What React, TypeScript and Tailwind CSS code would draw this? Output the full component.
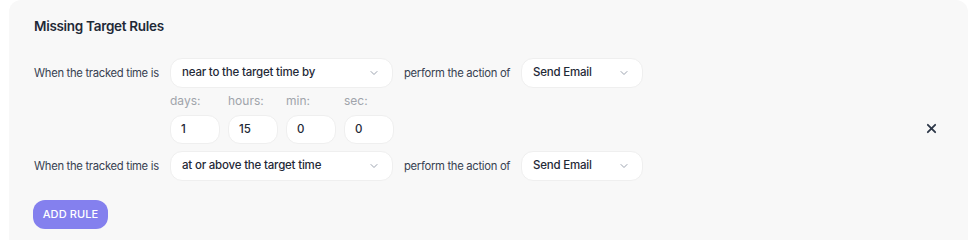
import React from "react";

const Chevron = () => (
  <svg width="12" height="12" viewBox="0 0 24 24" fill="none" stroke="#9ca3af" strokeWidth="2" strokeLinecap="round" strokeLinejoin="round">
    <path d="M6 9l6 6 6-6" />
  </svg>
);

const Select = ({ text, w }: { text: string; w: string }) => (
  <div className={`${w} h-[30px] bg-white border border-[#efefef] rounded-[12px] flex items-center justify-between pl-[11px] pr-[12px]`}>
    <span className="text-[11.5px] tracking-[-0.2px] font-medium text-[#1f2937] whitespace-nowrap">{text}</span>
    <Chevron />
  </div>
);

const TimeField = ({ label, value }: { label: string; value: string }) => (
  <div className="flex flex-col w-[50px]">
    <span className="text-[12px] text-[#a0a4ab] h-[20px] leading-[20px]">{label}</span>
    <div className="mt-[4px] h-[29px] bg-white border border-[#efefef] rounded-[12px] flex items-center pl-[10px] text-[11.5px] font-medium text-[#1f2937]">
      {value}
    </div>
  </div>
);

const Label = ({ text, w, ml }: { text: string; w: string; ml?: string }) => (
  <span className={`${w} ${ml ?? ""} text-[11.25px] tracking-[-0.3px] text-[#374151] whitespace-nowrap shrink-0`}>{text}</span>
);

export default function App() {
  return (
    <div className="w-[974px] h-[240px] bg-white overflow-hidden" style={{ fontFamily: "Inter, 'Noto Sans', sans-serif" }}>
      <div className="ml-[9px] w-[959px] h-[250px] bg-[#f8f8f8] rounded-[12px] pl-[25px] pr-[29px] pt-[15px]">
        <h2 className="text-[13.5px] tracking-[-0.3px] font-semibold text-[#1f2937] leading-[22px]">Missing Target Rules</h2>
        <div className="mt-[21px] relative">
          <div className="flex items-center">
            <Label text="When the tracked time is" w="w-[136px]" />
            <Select text="near to the target time by" w="w-[223px]" />
            <Label text="perform the action of" w="w-[117px]" ml="ml-[11px]" />
            <Select text="Send Email" w="w-[122px]" />
          </div>
          <div className="ml-[136px] mt-[3px] flex gap-[8px]">
            <TimeField label="days:" value="1" />
            <TimeField label="hours:" value="15" />
            <TimeField label="min:" value="0" />
            <TimeField label="sec:" value="0" />
          </div>
          <button className="absolute right-[0px] top-[62px] w-[16px] h-[16px] flex items-center justify-center">
            <svg width="11" height="11" viewBox="0 0 24 24" fill="none" stroke="#2d3748" strokeWidth="4" strokeLinecap="round">
              <path d="M4 4l16 16M20 4L4 20" />
            </svg>
          </button>
        </div>
        <div className="mt-[7px] flex items-center">
          <Label text="When the tracked time is" w="w-[136px]" />
          <Select text="at or above the target time" w="w-[223px]" />
          <Label text="perform the action of" w="w-[117px]" ml="ml-[11px]" />
          <Select text="Send Email" w="w-[122px]" />
        </div>
        <button className="mt-[19px] -ml-[1px] h-[29px] w-[75px] rounded-[12px] bg-[#8480ee] text-white text-[11px] font-medium uppercase tracking-[0.1px]">
          Add Rule
        </button>
      </div>
    </div>
  );
}
